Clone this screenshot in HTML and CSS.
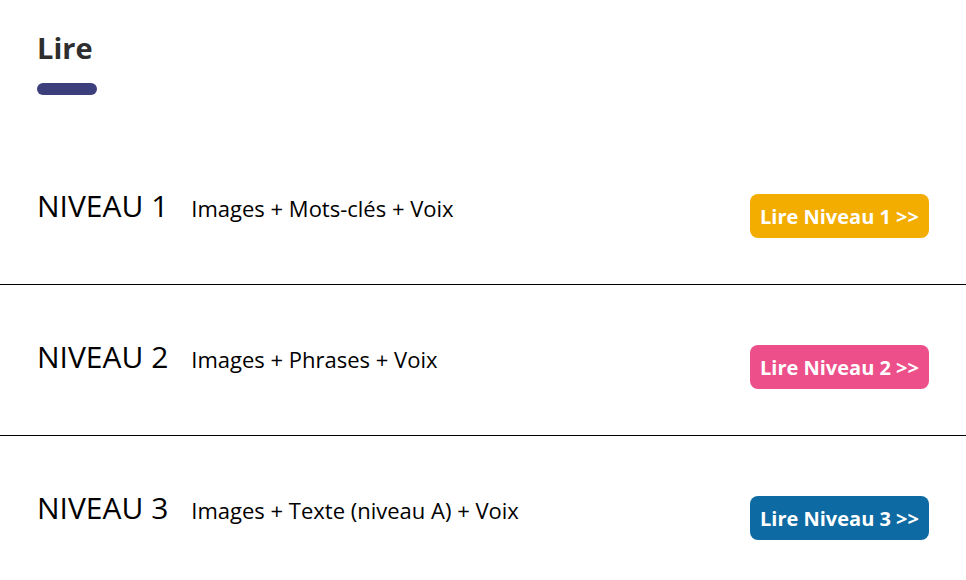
FILE: index.html
```html
<!DOCTYPE html>
<html lang="fr">
<head>
<meta charset="utf-8">
<title>Lire</title>
<link rel="stylesheet" href="styles.css">
</head>
<body>
<header class="head">
  <h1 class="title">Lire</h1>
  <div class="bar"></div>
</header>
<section class="levels">
  <div class="row">
    <div class="info">
      <span class="level">NIVEAU 1</span>
      <span class="desc">Images + Mots-clés + Voix</span>
    </div>
    <a class="btn btn-yellow" href="#">Lire Niveau 1 &gt;&gt;</a>
  </div>
  <div class="row">
    <div class="info">
      <span class="level">NIVEAU 2</span>
      <span class="desc">Images + Phrases + Voix</span>
    </div>
    <a class="btn btn-pink" href="#">Lire Niveau 2 &gt;&gt;</a>
  </div>
  <div class="row">
    <div class="info">
      <span class="level">NIVEAU 3</span>
      <span class="desc">Images + Texte (niveau A) + Voix</span>
    </div>
    <a class="btn btn-blue" href="#">Lire Niveau 3 &gt;&gt;</a>
  </div>
</section>
</body>
</html>
```
FILE: styles.css
```css
html, body {
  margin: 0;
  padding: 0;
  background: #fff;
  font-family: "Open Sans", "Noto Sans", sans-serif;
}
.head {
  height: 134px;
  padding: 0 37px;
  box-sizing: border-box;
  padding-top: 28px;
}
.title {
  margin: 0;
  font-size: 29px;
  font-weight: 700;
  color: #2e2e2e;
  line-height: 40px;
}
.bar {
  width: 60px;
  height: 12px;
  border-radius: 6px;
  background: #3d3f7d;
  margin-top: 15px;
}
.row {
  display: flex;
  justify-content: space-between;
  align-items: flex-start;
  padding: 60px 37px 46px;
  height: 44px;
}
.row + .row {
  border-top: 1px solid #000;
}
.info {
  display: flex;
  align-items: baseline;
  margin-top: -8px;
}
.level {
  font-size: 30px;
  color: #000;
  line-height: 40px;
  margin-right: 23px;
}
.desc {
  font-size: 22px;
  color: #000;
}
.btn {
  display: flex;
  align-items: center;
  justify-content: center;
  width: 179px;
  height: 44px;
  border-radius: 8px;
  color: #fff;
  text-decoration: none;
  font-weight: 700;
  font-size: 20px;
}
.btn-yellow { background: #f2ad00; }
.btn-pink { background: #ed4f8b; }
.btn-blue { background: #0d6aa2; }
```
